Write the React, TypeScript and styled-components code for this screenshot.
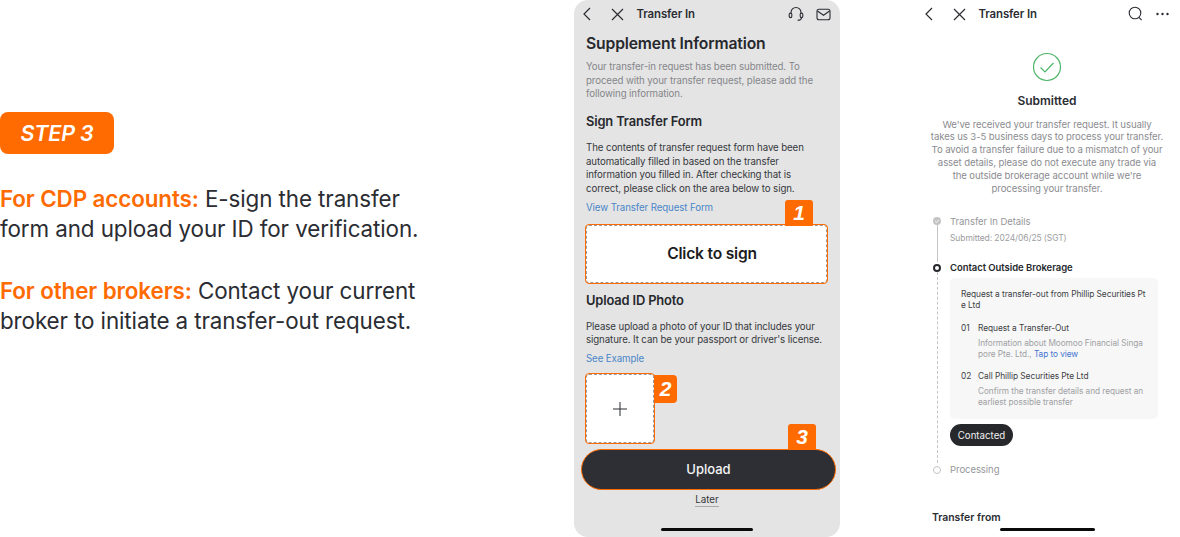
import React from "react";
import styled, { createGlobalStyle } from "styled-components";

const Global = createGlobalStyle`
  html, body { margin: 0; padding: 0; background: #fff; }
  body { font-family: Inter, "Liberation Sans", sans-serif; color: #2b2d33; }
  * { box-sizing: border-box; }
`;
const Page = styled.div`
  width: 1180px; height: 537px; overflow: hidden; display: flex; align-items: flex-start; background: #fff;
`;
const Intro = styled.section`
  width: 574px; padding-top: 112px; display: flex; flex-direction: column; align-items: flex-start;
`;
const Step = styled.div`
  width: 114px; height: 42px; border-radius: 8px; background: #ff6b00; color: #fff;
  font-size: 21.5px; font-weight: 600; font-style: italic; display: flex; align-items: center; justify-content: center; letter-spacing: -0.2px;
`;
const Para = styled.p<{ $top: number }>`
  margin: ${p => p.$top}px 0 0; font-size: 22.4px; line-height: 30px; letter-spacing: -0.1px; color: #2b2d33; white-space: nowrap;
  strong { color: #ff6b00; font-weight: 600; }
`;
const Phone = styled.section`
  position: relative; width: 266px; height: 537px; border-radius: 14px; background: #e4e4e4; flex: none; padding: 0 12px;
  display: flex; flex-direction: column;
`;
const Phone2 = styled.section`
  position: relative; width: 262px; height: 537px; margin-left: 78px; flex: none; padding: 0 0 0 10px; display: flex; flex-direction: column;
`;
const Nav = styled.div`
  height: 28px; display: flex; align-items: center; color: #2b2d33; flex: none;
`;
const NavTitle = styled.span`
  font-size: 11.4px; font-weight: 600; margin-left: 12.5px; flex: 1; color: #2b2d33; letter-spacing: -0.1px;
`;
const IconBtn = styled.svg<{ $ml?: number; $mr?: number }>`
  flex: none; margin-left: ${p => p.$ml ?? 0}px; margin-right: ${p => p.$mr ?? 0}px; display: block;
`;
const H1 = styled.h1`
  margin: 7px 0 0; font-size: 15.7px; line-height: 18px; font-weight: 600; color: #26282d; letter-spacing: -0.15px;
`;
const H2 = styled.h2<{ $top: number }>`
  margin: ${p => p.$top}px 0 0; font-size: 12.9px; line-height: 16px; font-weight: 600; color: #26282d; letter-spacing: -0.15px;
`;
const Body = styled.p<{ $top: number; $muted?: boolean }>`
  margin: ${p => p.$top}px 0 0; font-size: 9.7px; line-height: 13.6px; letter-spacing: -0.1px; white-space: nowrap;
  color: ${p => (p.$muted ? "#85868a" : "#36383d")};
`;
const LinkText = styled.div<{ $top: number }>`
  margin-top: ${p => p.$top}px; font-size: 9.7px; line-height: 13px; color: #4a86c8; letter-spacing: -0.1px;
`;
const SignBox = styled.div`
  position: relative; margin: 11px 0 0 0; width: 241px; height: 58px; background: #fff; border-radius: 3px; outline: 1px solid #ff6b00;
  border: 1px dashed #9a9a9a; padding-left: 11px; display: flex; align-items: center; justify-content: center;
  font-size: 15.6px; font-weight: 600; color: #1b1c20; letter-spacing: -0.2px;
`;
const PhotoBox = styled.div`
  position: relative; margin-top: 9.5px; width: 68px; height: 69px; background: #fff; border-radius: 3px; outline: 1px solid #ff6b00;
  border: 1px dashed #9a9a9a; display: flex; align-items: center; justify-content: center;
`;
const Badge = styled.span<{ $top: number; $left: number; $w: number; $h: number; $corners: string }>`
  position: absolute; top: ${p => p.$top}px; left: ${p => p.$left}px; width: ${p => p.$w}px; height: ${p => p.$h}px; background: #ff6b00; border-radius: ${p => p.$corners};
  color: #fff; font-size: 21px; font-weight: 700; font-style: italic; font-family: "Liberation Sans", sans-serif;
  display: flex; align-items: center; justify-content: center;
`;
const UploadBtn = styled.div`
  position: relative; margin: 5.5px 0 0 -5px; width: 255px; height: 41px; border-radius: 21px; background: #2d2f34; border: 1px solid #ff6b00;
  display: flex; align-items: center; justify-content: center; color: #f4f4f4; font-size: 13px; font-weight: 500;
`;
const Later = styled.div`
  align-self: center; margin: 4.5px 0 0 0; font-size: 9.8px; line-height: 12px; color: #35373c; border-bottom: 1px solid #a9a9a9;
`;
const HomeBar = styled.div<{ $left: number; $w: number }>`
  position: absolute; left: ${p => p.$left}px; bottom: 6px; width: ${p => p.$w}px; height: 3px; border-radius: 2px; background: #0a0a0a;
`;
const Success = styled.div`
  margin: 24px 0 0; display: flex; flex-direction: column; align-items: center; width: 238px;
`;
const Submitted = styled.div`
  margin-top: 11px; font-size: 12px; line-height: 16px; font-weight: 600; color: #2b2d33;
`;
const Notice = styled.p`
  margin: 9.5px 0 0; font-size: 9.6px; line-height: 12.9px; letter-spacing: -0.1px; color: #8b8c90; text-align: center; white-space: nowrap;
`;
const Timeline = styled.div`
  margin: 20.5px 0 0 3px; display: flex; flex-direction: column;
`;
const TLRow = styled.div<{ $h?: number; $top?: number }>`
  position: relative; padding-left: 19px; margin-top: ${p => p.$top ?? 0}px;
  ${p => (p.$h ? `height: ${p.$h}px;` : "")}
`;
const DoneDot = styled.svg`
  position: absolute; left: 2px; top: 1px; display: block;
`;
const Dot = styled.span<{ $kind: "active" | "todo" }>`
  position: absolute; left: 2px; top: 2px; width: 8px; height: 8px; border-radius: 50%; background: #fff;
  border: ${p => (p.$kind === "active" ? "2px solid #26282d" : "1px solid #c4c4c4")};
`;
const Line = styled.span<{ $dashed?: boolean; $top: number; $h: number }>`
  position: absolute; left: 6px; top: ${p => p.$top}px; height: ${p => p.$h}px; width: 0;
  border-left: 1px ${p => (p.$dashed ? "dashed" : "solid")} #c4c4c4;
`;
const TLTitle = styled.div<{ $tone: string; $bold?: boolean }>`
  font-size: 9.5px; line-height: 12px; color: ${p => p.$tone}; font-weight: ${p => (p.$bold ? 600 : 400)}; letter-spacing: -0.05px;
`;
const TLSub = styled.div`
  margin-top: 4px; font-size: 8.5px; line-height: 12px; letter-spacing: -0.1px; color: #9c9d9f;
`;
const Card = styled.div`
  margin-top: 4px; width: 208px; height: 141px; border-radius: 5px; background: #f7f7f7; padding: 11px 0 0 11px;
`;
const CardLine = styled.div`
  font-size: 8.35px; line-height: 11px; color: #3d3f44; white-space: nowrap; letter-spacing: -0.05px;
`;
const StepRow = styled.div<{ $top: number }>`
  margin-top: ${p => p.$top}px; display: flex; font-size: 8.35px; line-height: 11px; color: #3d3f44; letter-spacing: -0.05px; white-space: nowrap;
`;
const StepNum = styled.span`
  width: 17px; flex: none;
`;
const StepDesc = styled.div`
  margin: 3.5px 0 0 17px; font-size: 8.25px; line-height: 11px; color: #a0a1a4; white-space: nowrap; letter-spacing: -0.05px;
  a { color: #3f74d0; text-decoration: none; }
`;
const Pill = styled.div`
  margin-top: 5px; width: 63px; height: 22px; border-radius: 11px; background: #27282b; color: #f0f0f0;
  font-size: 9.7px; display: flex; align-items: center; justify-content: center;
`;
const Section = styled.div`
  margin: 35px 0 0 4px; font-size: 10.4px; line-height: 14px; font-weight: 600; color: #2b2d33;
`;

const Back = () => (
  <IconBtn $ml={-4} width="10" height="14" viewBox="0 0 10 14" fill="none" stroke="#2b2d33" strokeWidth="1.2"><path d="M8 1 2 7l6 6" /></IconBtn>
);
const Close = () => (
  <IconBtn $ml={19} width="13" height="13" viewBox="0 0 13 13" fill="none" stroke="#2b2d33" strokeWidth="1.2"><path d="M1 1l11 11M12 1 1 12" /></IconBtn>
);

export default function App() {
  return (
    <Page>
      <Global />
      <Intro>
        <Step>STEP 3</Step>
        <Para $top={30}><strong>For CDP accounts:</strong> E-sign the transfer<br />form and upload your ID for verification.</Para>
        <Para $top={32}><strong>For other brokers:</strong> Contact your current<br />broker to initiate a transfer-out request.</Para>
      </Intro>
      <Phone>
        <Nav>
          <Back />
          <Close />
          <NavTitle>Transfer In</NavTitle>
          <IconBtn width="16" height="16" viewBox="0 0 16 16" fill="none" stroke="#2b2d33" strokeWidth="1.1">
            <path d="M3 8V6.5a5 5 0 0 1 10 0V8" /><rect x="1.2" y="7" width="2.6" height="4.6" rx="1.3" /><rect x="12.2" y="7" width="2.6" height="4.6" rx="1.3" /><path d="M13.5 11.5c0 1.8-1.6 2.8-4 2.8" />
          </IconBtn>
          <IconBtn $ml={12} $mr={-3} width="15" height="13" viewBox="0 0 15 13" fill="none" stroke="#2b2d33" strokeWidth="1.1">
            <rect x="1" y="1.2" width="13" height="10.6" rx="2" /><path d="M1.5 3 7.5 7.3 13.5 3" />
          </IconBtn>
        </Nav>
        <H1>Supplement Information</H1>
        <Body $top={7} $muted>Your transfer-in request has been submitted. To<br />proceed with your transfer request, please add the<br />following information.</Body>
        <H2 $top={13}>Sign Transfer Form</H2>
        <Body $top={11.5}>The contents of transfer request form have been<br />automatically filled in based on the transfer<br />information you filled in. After checking that is<br />correct, please click on the area below to sign.</Body>
        <LinkText $top={5}>View Transfer Request Form</LinkText>
        <SignBox>
          <Badge $top={-26} $left={198} $w={28} $h={26} $corners="3px 3px 0 0">1</Badge>
          Click to sign
        </SignBox>
        <H2 $top={10}>Upload ID Photo</H2>
        <Body $top={11}>Please upload a photo of your ID that includes your<br />signature. It can be your passport or driver's license.</Body>
        <LinkText $top={5}>See Example</LinkText>
        <PhotoBox>
          <Badge $top={0} $left={67} $w={23} $h={28} $corners="0 4px 4px 0">2</Badge>
          <svg width="14" height="14" viewBox="0 0 14 14" stroke="#2b2d33" strokeWidth="1"><path d="M7 0v14M0 7h14" /></svg>
        </PhotoBox>
        <UploadBtn>
          <Badge $top={-26} $left={206} $w={28} $h={26} $corners="3px 3px 0 0">3</Badge>
          Upload
        </UploadBtn>
        <Later>Later</Later>
        <HomeBar $left={87} $w={92} />
      </Phone>
      <Phone2>
        <Nav>
          <Back />
          <Close />
          <NavTitle>Transfer In</NavTitle>
          <IconBtn width="15" height="16" viewBox="0 0 15 16" fill="none" stroke="#2b2d33" strokeWidth="1.1"><circle cx="7" cy="7" r="5.8" /><path d="m11 11.3 2.6 2.8" /></IconBtn>
          <IconBtn $ml={13} $mr={11} width="13" height="4" viewBox="0 0 13 4" fill="#2b2d33"><circle cx="1.5" cy="2" r="1.2" /><circle cx="6.5" cy="2" r="1.2" /><circle cx="11.5" cy="2" r="1.2" /></IconBtn>
        </Nav>
        <Success>
          <svg width="30" height="30" viewBox="0 0 30 30" fill="none" stroke="#4db56a" strokeWidth="1.2"><circle cx="15" cy="15" r="13.5" /><path d="m8.5 15.5 4.5 4.5 8.5-9" /></svg>
          <Submitted>Submitted</Submitted>
          <Notice>We've received your transfer request. It usually<br />takes us 3-5 business days to process your transfer.<br />To avoid a transfer failure due to a mismatch of your<br />asset details, please do not execute any trade via<br />the outside brokerage account while we're<br />processing your transfer.</Notice>
        </Success>
        <Timeline>
          <TLRow $h={46}>
            <DoneDot width="8" height="8" viewBox="0 0 8 8">
              <circle cx="4" cy="4" r="4" fill="#c4c4c4" />
              <path d="M2.2 4.1 3.5 5.4 5.9 2.8" fill="none" stroke="#fff" strokeWidth="0.9" />
            </DoneDot>
            <Line $top={9} $h={37} />
            <TLTitle $tone="#96979a">Transfer In Details</TLTitle>
            <TLSub>Submitted: 2024/06/25 (SGT)</TLSub>
          </TLRow>
          <TLRow>
            <Dot $kind="active" />
            <Line $dashed $top={10} $h={191} />
            <TLTitle $tone="#26282d" $bold>Contact Outside Brokerage</TLTitle>
            <Card>
              <CardLine>Request a transfer-out from Phillip Securities Pt</CardLine>
              <CardLine>e Ltd</CardLine>
              <StepRow $top={12}><StepNum>01</StepNum>Request a Transfer-Out</StepRow>
              <StepDesc>Information about Moomoo Financial Singa<br />pore Pte. Ltd., <a>Tap to view</a></StepDesc>
              <StepRow $top={11.5}><StepNum>02</StepNum>Call Phillip Securities Pte Ltd</StepRow>
              <StepDesc>Confirm the transfer details and request an<br />earliest possible transfer</StepDesc>
            </Card>
            <Pill>Contacted</Pill>
          </TLRow>
          <TLRow $top={18}>
            <Dot $kind="todo" />
            <TLTitle $tone="#96979a">Processing</TLTitle>
          </TLRow>
        </Timeline>
        <Section>Transfer from</Section>
        <HomeBar $left={82} $w={95} />
      </Phone2>
    </Page>
  );
}
